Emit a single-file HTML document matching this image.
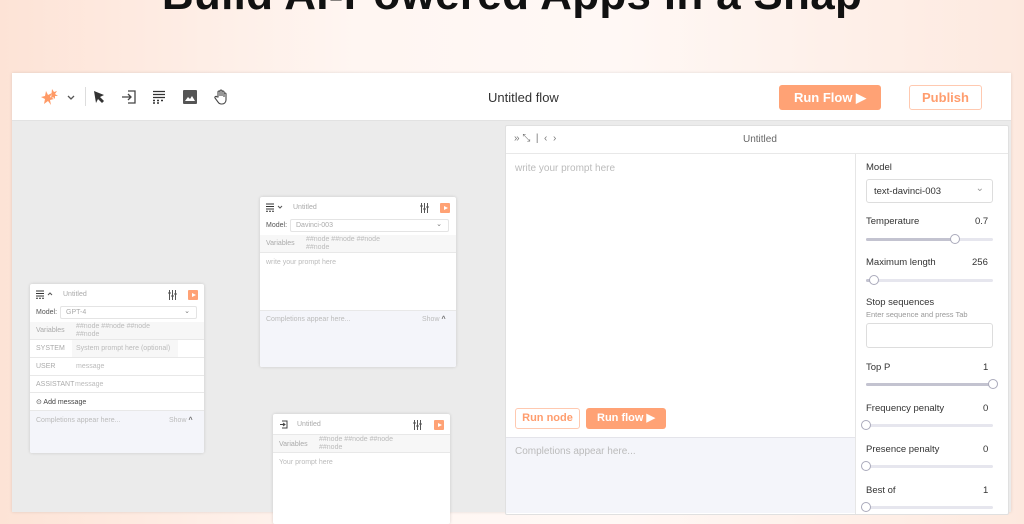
<!DOCTYPE html>
<html><head><meta charset="utf-8"><style>
*{box-sizing:border-box;margin:0;padding:0}
body{width:1024px;height:512px;overflow:hidden;font-family:"Liberation Sans",sans-serif;background:linear-gradient(90deg,#fde3d6 0%,#fff6f2 35%,#fff8f5 60%,#fde9df 100%);position:relative}
.abs{position:absolute}
h1{position:absolute;left:0;width:1024px;top:-30px;text-align:center;font-size:44px;font-weight:bold;color:#111;letter-spacing:0.3px}
.app{left:12px;top:73px;width:999px;height:439px;background:#ebebeb;box-shadow:0 0 3px rgba(0,0,0,.12)}
.hdr{left:12px;top:73px;width:999px;height:48px;background:#fff;border-bottom:1px solid #e2e2e2}
.t{position:absolute;white-space:nowrap}
.btnf{background:#ffa275;color:#fff;font-weight:bold;border-radius:3px;text-align:center}
.btno{background:#fff;color:#ff9d6e;border:1px solid #ffc9b0;font-weight:bold;border-radius:3px;text-align:center}
.node{position:absolute;background:#fff;box-shadow:0 0 3px rgba(0,0,0,.15);border-radius:2px;overflow:hidden;font-size:7px;color:#aaa}
.row{position:absolute;left:0;right:0;border-bottom:1px solid #e8e8e8}
.play{position:absolute;width:10px;height:10px;background:#ffa275;border-radius:1px}
.play:after{content:"";position:absolute;left:4px;top:2.5px;border-left:4px solid #fff;border-top:2.5px solid transparent;border-bottom:2.5px solid transparent}
.sl{position:absolute;left:866px;width:127px;height:3px;background:#e6e6ee;border-radius:2px}
.fill{position:absolute;left:0;top:0;height:3px;background:#c3c3d0;border-radius:2px}
.knob{position:absolute;top:-4px;width:10px;height:10px;border:1px solid #aab;background:#fff;border-radius:50%}
.sb{font-size:9.5px;color:#333}
.tune{position:absolute;width:9px;height:10px}
</style></head><body>
<h1>Build AI-Powered Apps in a Snap</h1>
<div class="abs app"></div>
<div class="abs hdr"></div>
<svg class="abs" style="left:40px;top:87px" width="40" height="22" viewBox="0 0 40 22">
<path d="M6 4 L8 8 L12 6 L10 10 L14 12 L10 13 L11 18 L8 14 L4 17 L5 12 L1 10 L5 9Z" fill="#ff9a66"/>
<path d="M12 2 L14 5 L17 4 L15 7 L18 9 L15 9 L15 12 L13 10 L11 12 Z" fill="#ff9a66"/>
<path d="M28 9 l3 3 l3 -3" stroke="#555" fill="none" stroke-width="1.3"/>
</svg>
<div class="abs" style="left:85px;top:87px;width:1px;height:19px;background:#ddd"></div>
<svg class="abs" style="left:92px;top:90px" width="14" height="14"><path d="M2 1 L12 5 L8 7 L12 11 L10 13 L6 9 L4 13Z" fill="#333"/></svg>
<svg class="abs" style="left:121px;top:90px" width="16" height="14"><path d="M7 1 H14 V13 H7" stroke="#444" fill="none" stroke-width="1.3"/><path d="M1 7 H10 M7 4 L10 7 L7 10" stroke="#444" fill="none" stroke-width="1.3"/></svg>
<svg class="abs" style="left:152px;top:90px" width="14" height="14"><path d="M1 1.5H13M1 4.5H13M1 7.5H13" stroke="#333" stroke-width="1.2"/><path d="M1 10.5H3M5 10.5H7M9 10.5H11M1 13H3M5 13H7" stroke="#333" stroke-width="1.5"/></svg>
<svg class="abs" style="left:183px;top:90px" width="14" height="14"><rect x="0" y="0" width="14" height="14" rx="1" fill="#555"/><path d="M2 11 L5 7 L7 9 L9 6 L12 11Z" fill="#fff"/></svg>
<svg class="abs" style="left:214px;top:89px" width="14" height="16"><path d="M4 8 V3 a1 1 0 0 1 2 0 V7 V2 a1 1 0 0 1 2 0 V7 V3 a1 1 0 0 1 2 0 V8 V5 a1 1 0 0 1 2 0 V11 a4 4 0 0 1 -4 4 H7 a4 4 0 0 1 -3 -2 L1 9 a1 1 0 0 1 2 -1 Z" stroke="#444" fill="none" stroke-width="1.1"/></svg>
<div class="t" style="left:488px;top:90px;font-size:13px;color:#333">Untitled flow</div>
<div class="abs btnf" style="left:779px;top:85px;width:102px;height:25px;line-height:25px;font-size:13px">Run Flow ▶</div>
<div class="abs btno" style="left:909px;top:85px;width:73px;height:25px;line-height:23px;font-size:13px">Publish</div>

<!-- node 1 -->
<div class="node" style="left:30px;top:284px;width:174px;height:169px">
 <svg class="abs" style="left:6px;top:6px" width="20" height="9"><path d="M0 1H8M0 3.5H8M0 6H8" stroke="#333" stroke-width="1"/><path d="M0 8.3H2M3 8.3H5M6 8.3H8" stroke="#333"/><path d="M12 5 l2 -2 l2 2" stroke="#555" fill="none"/></svg>
 <div class="t" style="left:33px;top:7px">Untitled</div>
 <svg class="tune" style="left:138px;top:6px"><path d="M1.5 0V10M4.5 0V10M7.5 0V10M0 3H3M3 6H6M6 4H9" stroke="#555" stroke-width="1"/></svg>
 <div class="play" style="left:158px;top:6px"></div>
 <div class="row" style="top:20px;height:18px;border:none"><span class="t" style="left:6px;top:5px;color:#555">Model:</span><div class="abs" style="left:30px;top:2px;width:137px;height:13px;border:1px solid #e4e4e4;border-radius:2px"><span class="t" style="left:5px;top:2px">GPT-4</span><span class="t" style="right:6px;top:0;color:#777">⌄</span></div></div>
 <div class="row" style="top:38px;height:18px;background:#f7f7f7"><span class="t" style="left:6px;top:5px">Variables</span><span class="t" style="left:46px;top:1px;line-height:8px;color:#bbb">##node ##node ##node<br>##node</span></div>
 <div class="row" style="top:56px;height:18px"><span class="t" style="left:6px;top:5px">SYSTEM</span><div class="abs" style="left:42px;top:0;width:106px;height:17px;background:#f7f7f7"></div><span class="t" style="left:46px;top:5px;color:#bbb">System prompt here (optional)</span></div>
 <div class="row" style="top:74px;height:18px"><span class="t" style="left:6px;top:5px">USER</span><span class="t" style="left:46px;top:5px;color:#bbb">message</span></div>
 <div class="row" style="top:92px;height:17px"><span class="t" style="left:6px;top:5px">ASSISTANT</span><span class="t" style="left:45px;top:5px;color:#bbb">message</span></div>
 <div class="row" style="top:109px;height:18px"><span class="t" style="left:6px;top:5px;color:#444">⊙ Add message</span></div>
 <div class="abs" style="left:0;right:0;top:127px;bottom:0;background:#f4f5fa"><span class="t" style="left:6px;top:6px;color:#bbb">Completions appear here...</span><span class="t" style="left:139px;top:6px;color:#bbb">Show <b style="color:#666">^</b></span></div>
</div>

<!-- node 2 -->
<div class="node" style="left:260px;top:197px;width:196px;height:170px">
 <svg class="abs" style="left:6px;top:6px" width="20" height="9"><path d="M0 1H8M0 3.5H8M0 6H8" stroke="#333" stroke-width="1"/><path d="M0 8.3H2M3 8.3H5M6 8.3H8" stroke="#333"/><path d="M12 3 l2 2 l2 -2" stroke="#555" fill="none"/></svg>
 <div class="t" style="left:33px;top:7px">Untitled</div>
 <svg class="tune" style="left:160px;top:6px"><path d="M1.5 0V10M4.5 0V10M7.5 0V10M0 3H3M3 6H6M6 4H9" stroke="#555" stroke-width="1"/></svg>
 <div class="play" style="left:180px;top:6px"></div>
 <div class="row" style="top:20px;height:18px;border:none"><span class="t" style="left:6px;top:5px;color:#555">Model:</span><div class="abs" style="left:30px;top:2px;width:159px;height:13px;border:1px solid #e4e4e4;border-radius:2px"><span class="t" style="left:5px;top:2px">Davinci-003</span><span class="t" style="right:6px;top:0;color:#777">⌄</span></div></div>
 <div class="row" style="top:38px;height:18px;background:#f7f7f7"><span class="t" style="left:6px;top:5px">Variables</span><span class="t" style="left:46px;top:1px;line-height:8px;color:#bbb">##node ##node ##node<br>##node</span></div>
 <span class="t" style="left:6px;top:62px;color:#bbb">write your prompt here</span>
 <div class="abs" style="left:0;right:0;top:113px;bottom:0;background:#f4f5fa;border-top:1px solid #e8e8e8"><span class="t" style="left:6px;top:5px;color:#bbb">Completions appear here...</span><span class="t" style="left:162px;top:5px;color:#bbb">Show <b style="color:#666">^</b></span></div>
</div>

<!-- node 3 -->
<div class="node" style="left:273px;top:414px;width:177px;height:110px">
 <svg class="abs" style="left:6px;top:6px" width="10" height="9"><path d="M3 1H8V8H3M1 4.5H6M4 3L6 4.5L4 6" stroke="#444" fill="none"/></svg>
 <div class="t" style="left:24px;top:7px">Untitled</div>
 <svg class="tune" style="left:140px;top:6px"><path d="M1.5 0V10M4.5 0V10M7.5 0V10M0 3H3M3 6H6M6 4H9" stroke="#555" stroke-width="1"/></svg>
 <div class="play" style="left:161px;top:6px"></div>
 <div class="row" style="top:20px;height:19px;background:#f7f7f7;border-top:1px solid #e8e8e8"><span class="t" style="left:6px;top:6px">Variables</span><span class="t" style="left:46px;top:1px;line-height:8px;color:#bbb">##node ##node ##node<br>##node</span></div>
 <span class="t" style="left:6px;top:45px;color:#bbb">Your prompt here</span>
</div>

<!-- right panel -->
<div class="abs" style="left:505px;top:125px;width:504px;height:390px;background:#fff;border:1px solid #e0e0e0;border-radius:2px"></div>
<div class="abs" style="left:506px;top:153px;width:502px;height:1px;background:#e8e8e8"></div>
<div class="t" style="left:514px;top:133px;font-size:10px;color:#777">» ⤡ &nbsp;| &nbsp;‹ &nbsp;›</div>
<div class="t" style="left:743px;top:134px;font-size:10px;color:#666">Untitled</div>
<div class="t" style="left:515px;top:163px;font-size:10px;color:#bbb">write your prompt here</div>
<div class="abs btno" style="left:515px;top:408px;width:65px;height:21px;line-height:19px;font-size:11px">Run node</div>
<div class="abs btnf" style="left:586px;top:408px;width:80px;height:21px;line-height:21px;font-size:11px">Run flow ▶</div>
<div class="abs" style="left:506px;top:437px;width:349px;height:76px;background:#f4f5fa;border-top:1px solid #e4e4ea"></div>
<div class="t" style="left:515px;top:446px;font-size:10px;color:#bbb">Completions appear here...</div>
<div class="abs" style="left:855px;top:154px;width:1px;height:360px;background:#e6e6e6"></div>

<div class="t sb" style="left:866px;top:162px">Model</div>
<div class="abs" style="left:866px;top:179px;width:127px;height:24px;border:1px solid #ddd;border-radius:3px"><span class="t sb" style="left:7px;top:6px">text-davinci-003</span><span class="t" style="right:8px;top:3px;color:#999;font-size:10px">⌄</span></div>
<div class="t sb" style="left:866px;top:216px">Temperature</div><div class="t sb" style="left:975px;top:216px">0.7</div>
<div class="sl" style="top:238px"><div class="fill" style="width:89px"></div><div class="knob" style="left:84px"></div></div>
<div class="t sb" style="left:866px;top:257px">Maximum length</div><div class="t sb" style="left:972px;top:257px">256</div>
<div class="sl" style="top:279px"><div class="fill" style="width:6px"></div><div class="knob" style="left:3px"></div></div>
<div class="t sb" style="left:866px;top:297px">Stop sequences</div>
<div class="t" style="left:866px;top:310px;font-size:7.5px;color:#999">Enter sequence and press Tab</div>
<div class="abs" style="left:866px;top:323px;width:127px;height:25px;border:1px solid #ddd;border-radius:3px"></div>
<div class="t sb" style="left:866px;top:362px">Top P</div><div class="t sb" style="left:983px;top:362px">1</div>
<div class="sl" style="top:383px"><div class="fill" style="width:127px"></div><div class="knob" style="left:122px"></div></div>
<div class="t sb" style="left:866px;top:403px">Frequency penalty</div><div class="t sb" style="left:983px;top:403px">0</div>
<div class="sl" style="top:424px"><div class="knob" style="left:-5px"></div></div>
<div class="t sb" style="left:866px;top:444px">Presence penalty</div><div class="t sb" style="left:983px;top:444px">0</div>
<div class="sl" style="top:465px"><div class="knob" style="left:-5px"></div></div>
<div class="t sb" style="left:866px;top:485px">Best of</div><div class="t sb" style="left:983px;top:485px">1</div>
<div class="sl" style="top:506px"><div class="knob" style="left:-5px"></div></div>
</body></html>
